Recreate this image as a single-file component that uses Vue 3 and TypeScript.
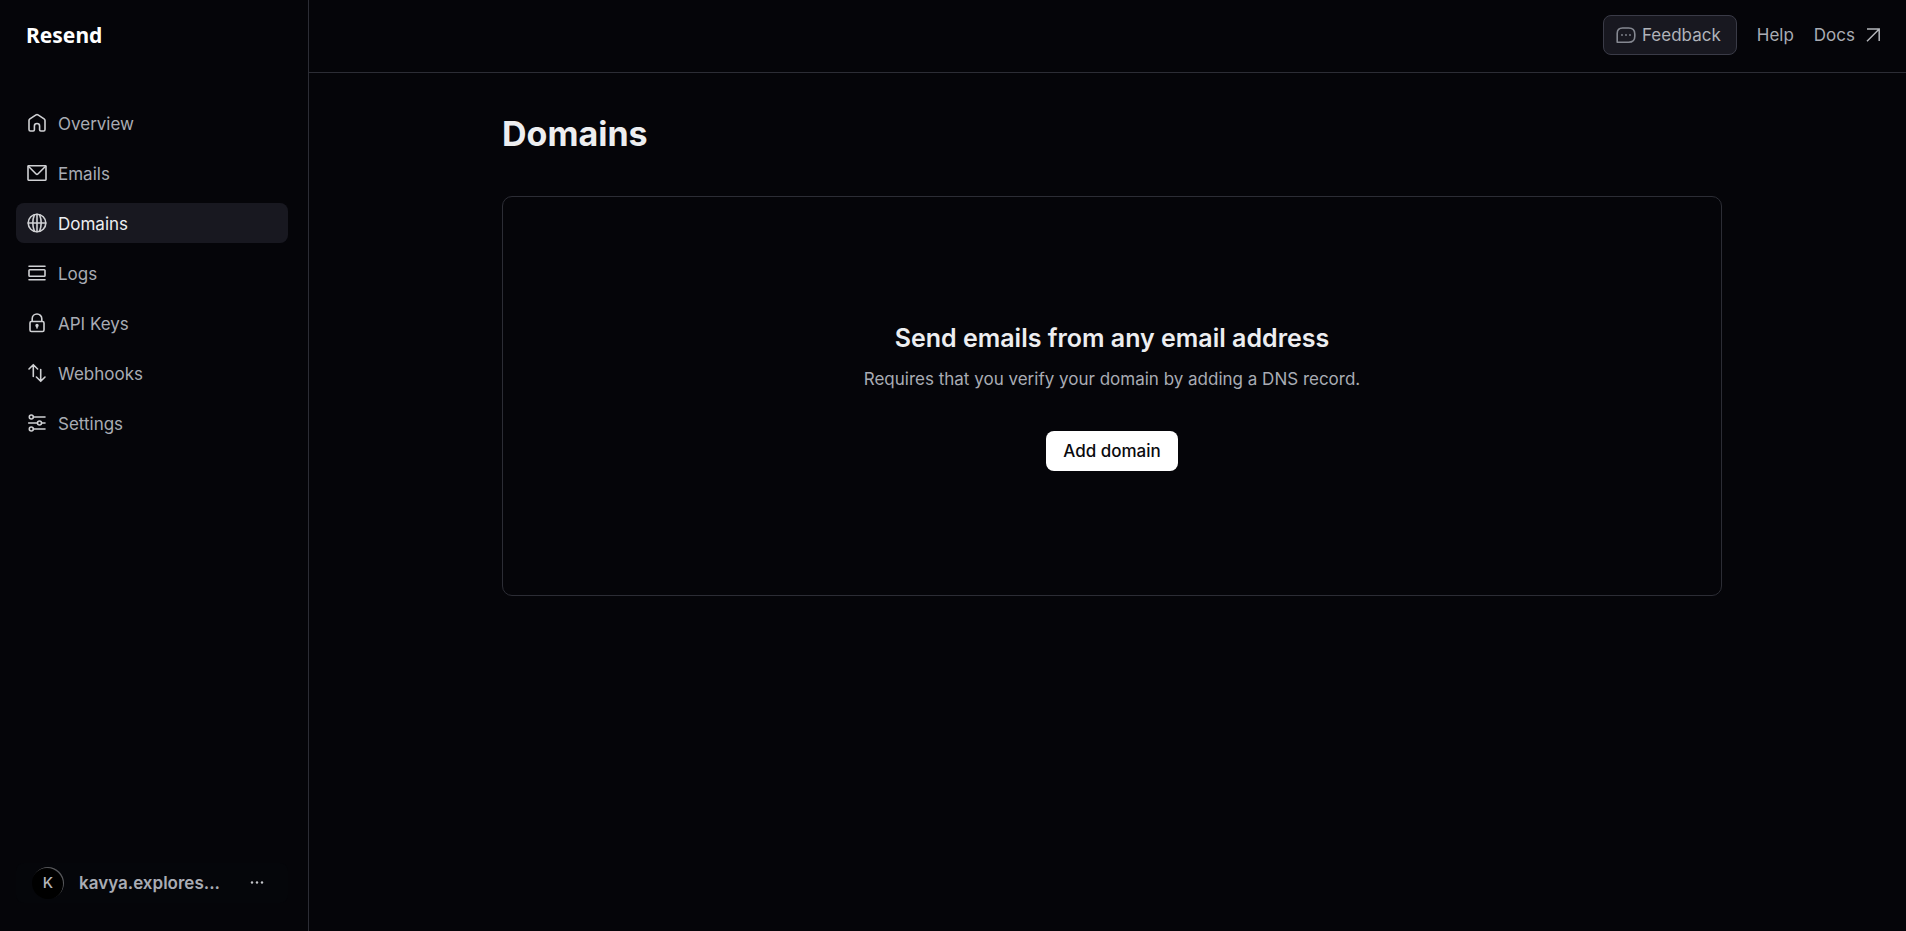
<script setup lang="ts">
interface NavItem {
  label: string
  icon: string
  active?: boolean
}

const navItems: NavItem[] = [
  { label: 'Overview', icon: 'home' },
  { label: 'Emails', icon: 'mail' },
  { label: 'Domains', icon: 'globe', active: true },
  { label: 'Logs', icon: 'logs' },
  { label: 'API Keys', icon: 'lock' },
  { label: 'Webhooks', icon: 'arrows' },
  { label: 'Settings', icon: 'sliders' },
]
</script>

<template>
  <div class="app">
    <aside class="sidebar">
      <a class="logo" href="#">Resend</a>
      <nav class="nav" aria-label="Main">
        <a
          v-for="item in navItems"
          :key="item.label"
          href="#"
          class="nav-item"
          :class="{ active: item.active }"
          :aria-current="item.active ? 'page' : undefined"
        >
          <svg class="icon" viewBox="0 0 22 22" aria-hidden="true">
            <path
              v-if="item.icon === 'home'"
              d="M3 8.6 Q3 7.5 3.9 6.9 L10 2.9 Q11 2.3 12 2.9 L18.1 6.9 Q19 7.5 19 8.6 V17.6 Q19 19 17.6 19 H14.8 Q13.6 19 13.6 17.8 V14 Q13.6 11.5 11 11.5 Q8.4 11.5 8.4 14 V17.8 Q8.4 19 7.2 19 H4.4 Q3 19 3 17.6 Z"
            />
            <template v-else-if="item.icon === 'mail'">
              <rect x="2" y="3.8" width="18" height="14.4" rx="0.6" />
              <path d="M2.4 4.3 L10.1 12 Q11 12.8 11.9 12 L19.6 4.3" />
            </template>
            <g v-else-if="item.icon === 'globe'">
              <circle cx="11" cy="11" r="8.8" />
              <path d="M2.2 11 H19.8 M11 2.2 V19.8 M8.4 2.8 Q5.2 11 8.4 19.2 M13.6 2.8 Q16.8 11 13.6 19.2" />
            </g>
            <g v-else-if="item.icon === 'logs'">
              <path d="M3 4.2 H19 M3 17.8 H19" />
              <rect x="3" y="7.8" width="16" height="6.4" rx="0.8" />
            </g>
            <g v-else-if="item.icon === 'lock'">
              <rect x="4" y="9.5" width="14" height="10" rx="1.4" />
              <path d="M6.2 9.2 V6.8 A4.8 4.8 0 0 1 15.8 6.8 V9.2" />
              <circle class="solid" cx="11" cy="13.4" r="0.9" />
              <path d="M11 13.4 V16" />
            </g>
            <path
              v-else-if="item.icon === 'arrows'"
              d="M7.3 14.4 V2.9 M3 7 L7.3 2.7 L11.6 7 M14.7 7.6 V19.1 M10.4 15 L14.7 19.3 L19 15"
            />
            <g v-else>
              <circle cx="5.3" cy="5" r="2" />
              <circle cx="13.5" cy="11" r="2" />
              <circle cx="5.3" cy="17" r="2" />
              <path d="M7.6 5 H19 M2.7 11 H11.3 M15.7 11 H19 M7.6 17 H19" />
            </g>
          </svg>
          <span class="nav-label">{{ item.label }}</span>
        </a>
      </nav>
      <button class="account" type="button">
        <span class="avatar">K</span>
        <span class="account-name">kavya.explores...</span>
        <svg class="dots" viewBox="0 0 18 18" aria-hidden="true">
          <circle cx="4" cy="8.5" r="1.2" />
          <circle cx="9" cy="8.5" r="1.2" />
          <circle cx="14" cy="8.5" r="1.2" />
        </svg>
      </button>
    </aside>

    <div class="page">
      <header class="topbar">
        <button class="feedback" type="button">
          <svg class="chat" viewBox="0 0 20 20" aria-hidden="true">
            <path d="M1.2 17.2 V8.4 Q1.2 3 6.6 3 H12.6 Q18.8 3 18.8 9 V11.2 Q18.8 17.2 12.6 17.2 Z" />
            <g class="chat-dots">
              <circle cx="6" cy="10" r="0.9" />
              <circle cx="10" cy="10" r="0.9" />
              <circle cx="14" cy="10" r="0.9" />
            </g>
          </svg>
          <span>Feedback</span>
        </button>
        <a class="top-link" href="#">Help</a>
        <a class="top-link" href="#">
          <span>Docs</span>
          <svg class="arrow" viewBox="0 0 18 18" aria-hidden="true">
            <path d="M3 3 H15.2 V15 M15 3.2 L3 15.2" />
          </svg>
        </a>
      </header>

      <main class="content">
        <h1>Domains</h1>
        <section class="empty">
          <h2>Send emails from any email address</h2>
          <p>Requires that you verify your domain by adding a DNS record.</p>
          <button class="primary" type="button">Add domain</button>
        </section>
      </main>
    </div>
  </div>
</template>

<style>
body {
  background: #050509;
}
</style>

<style scoped>
.app {
  display: flex;
  min-height: 100vh;
  color: #a9acb4;
  background: #050509;
  font-family: Inter, 'Liberation Sans', sans-serif;
  font-size: 17px;
  line-height: 24px;
}

.app * {
  box-sizing: border-box;
}

a {
  color: inherit;
  text-decoration: none;
}

button {
  font: inherit;
  color: inherit;
  cursor: pointer;
}

.sidebar {
  display: flex;
  flex: none;
  flex-direction: column;
  width: 309px;
  padding: 0 20px 28px 16px;
  border-right: 1px solid #2c2d35;
}

.logo {
  display: flex;
  align-items: center;
  height: 70px;
  padding-left: 10px;
  color: #fff;
  font-family: 'Noto Sans', sans-serif;
  font-size: 21px;
  font-weight: 700;
}

.nav {
  display: flex;
  flex-direction: column;
  gap: 10px;
  margin-top: 33px;
}

.nav-item {
  display: flex;
  align-items: center;
  gap: 10px;
  height: 40px;
  padding: 0 10px;
  border-radius: 8px;
}

.nav-item.active {
  color: #edeef0;
  background: #181820;
}

.nav-label {
  padding-top: 2px;
}

.icon {
  width: 22px;
  height: 22px;
  fill: none;
  stroke: #d0d1d4;
  stroke-width: 1.6;
  stroke-linecap: round;
  stroke-linejoin: round;
}

.solid {
  fill: #d0d1d4;
}

.account {
  display: flex;
  align-items: center;
  height: 40px;
  margin-top: auto;
  padding: 0 16px;
  border: 0;
  border-radius: 8px;
  background: #05060a;
  text-align: left;
}

.avatar {
  display: flex;
  align-items: center;
  justify-content: center;
  width: 32px;
  height: 32px;
  margin-right: 15px;
  border-radius: 50%;
  background: #000;
  box-shadow: inset -1px 1px 0 #56575b;
  color: #b4b6bb;
  font-size: 15px;
  font-weight: 500;
}

.account-name {
  flex: 1;
  font-weight: 600;
}

.dots {
  width: 18px;
  height: 18px;
  margin-right: 6px;
  fill: #c4c5c9;
}

.page {
  flex: 1;
  min-width: 0;
}

.topbar {
  display: flex;
  align-items: center;
  justify-content: flex-end;
  gap: 20px;
  height: 73px;
  padding: 0 24px 2px;
  border-bottom: 1px solid #2c2d35;
}

.feedback {
  display: flex;
  align-items: center;
  gap: 6px;
  height: 40px;
  padding: 0 15px 0 12px;
  border: 1px solid #3a3b47;
  border-radius: 8px;
  background: #181820;
  color: #b0b3ba;
}

.chat {
  width: 20px;
  height: 20px;
  fill: none;
  stroke: #858891;
  stroke-width: 1.6;
  stroke-linejoin: round;
}

.chat-dots {
  fill: #858891;
  stroke: none;
}

.top-link {
  display: flex;
  align-items: center;
  gap: 9px;
}

.arrow {
  width: 18px;
  height: 18px;
  fill: none;
  stroke: #b4b6bb;
  stroke-width: 1.5;
}

.content {
  max-width: 1229px;
  margin: 0 auto;
  padding: 39px 0 0 9px;
}

h1 {
  margin: 0;
  color: #edeef0;
  font-size: 34px;
  font-weight: 700;
  line-height: 44px;
}

.empty {
  display: flex;
  flex-direction: column;
  align-items: center;
  justify-content: center;
  min-height: 400px;
  margin-top: 40px;
  padding-top: 1px;
  border: 1px solid #2c2d35;
  border-radius: 10px;
}

h2 {
  margin: 0;
  color: #edeef0;
  font-size: 25px;
  font-weight: 600;
  line-height: 32px;
}

p {
  margin: 13px 0 40px;
}

.primary {
  height: 40px;
  padding: 0 17px;
  border: 0;
  border-radius: 8px;
  background: #fff;
  color: #0a0a0e;
  font-weight: 500;
}
</style>
